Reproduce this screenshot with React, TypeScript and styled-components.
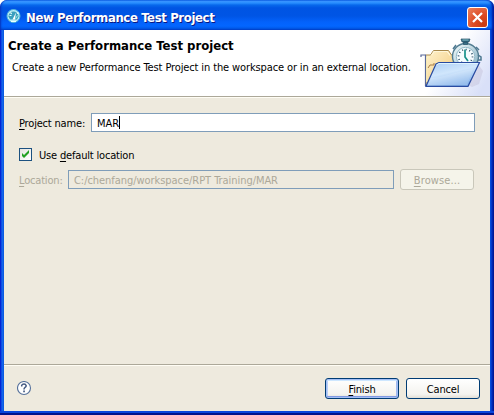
import React from "react";
import styled, { createGlobalStyle } from "styled-components";

const GlobalStyle = createGlobalStyle`
  * { box-sizing: border-box; }
  body { margin: 0; background: #fff; overflow: hidden; }
`;

const Window = styled.div`
  width: 494px;
  height: 415px;
  display: flex;
  flex-direction: column;
  padding: 0 4px 4px;
  border-radius: 7px 7px 0 0;
  background: linear-gradient(to right, #0019cf 0, #0831d9 1px, #166aee 2px, #0855dd 4px, #0855dd 490px, #0441d8 491px, #001ea0 493px, #00138c 494px);
  box-shadow: inset 0 -2px #00138c, inset 0 -4px #0a46dc;
  font-family: "DejaVu Sans Condensed", "DejaVu Sans", sans-serif;
  font-stretch: condensed;
  font-size: 11px;
  color: #000;
  overflow: hidden;
`;

const TitleBar = styled.header`
  flex: none;
  height: 30px;
  margin: 0 -4px;
  padding: 4px 6px 0 6px;
  display: flex;
  align-items: center;
  border-radius: 7px 7px 0 0;
  background: linear-gradient(to bottom, #0058e6 0, #3a93ff 1px, #288eff 3px, #0768ec 5px, #0054e3 8px, #0055e5 16px, #0362fb 22px, #0366ff 26px, #005bec 28px, #0042c8 30px);
  box-shadow: inset 2px 0 2px -1px #0831b8, inset -3px 0 2px -1px #001ea0;
`;

const Label = styled.span<{ $spacing?: number }>`
  white-space: pre;
  padding-top: 2px;
  line-height: 14px;
  letter-spacing: ${(p) => p.$spacing ?? -0.18}px;
  u { text-underline-offset: 2px; text-decoration-thickness: 1px; text-decoration-skip-ink: none; }
`;

const WindowTitle = styled(Label)`
  flex: 1;
  padding-left: 5px;
  color: #fff;
  font: bold 13px/16px "DejaVu Sans Condensed", "DejaVu Sans", sans-serif;
  font-stretch: condensed;
  text-shadow: 1px 1px #0a1883;
`;

const CloseButton = styled.button`
  width: 21px;
  height: 21px;
  padding: 0;
  border: 1px solid #fff;
  border-radius: 3px;
  background: radial-gradient(circle at 85% 90%, #c83a10 0, #de4a24 45%, #e9825f 100%);
  svg { display: block; }
`;

const Client = styled.main`
  flex: 1;
  min-height: 0;
  display: flex;
  flex-direction: column;
  background: #eeeade;
`;

const Banner = styled.section`
  flex: none;
  height: 67px;
  display: flex;
  justify-content: space-between;
  background: #fff;
  border-bottom: 1px solid #aca899;
`;

const BannerText = styled.div`
  flex: 1;
  min-width: 0;
  display: flex;
  flex-direction: column;
  padding: 8px 0 0 4px;
`;

const Heading = styled(Label)`
  padding: 0;
  font-size: 13px;
  font-weight: bold;
  line-height: 16px;
`;

const Description = styled(Label)`
  padding: 7px 0 0 4px;
`;

const BannerArt = styled.svg`
  flex: none;
  display: block;
`;

const Body = styled.section`
  flex: 1;
  border-top: 1px solid #fffdf4;
  padding: 15px 15px 0;
  display: flex;
  flex-direction: column;
`;

const Row = styled.div<{ $height: number; $top?: number }>`
  display: flex;
  align-items: center;
  height: ${(p) => p.$height}px;
  margin-top: ${(p) => p.$top ?? 0}px;
`;

const Caption = styled(Label)<{ $width: number; $muted?: boolean }>`
  width: ${(p) => p.$width}px;
  flex: none;
  color: ${(p) => (p.$muted ? "#aca899" : "#000")};
`;

const Field = styled.div<{ $width: number; $muted?: boolean }>`
  width: ${(p) => p.$width}px;
  height: 19px;
  display: flex;
  align-items: center;
  padding-left: 5px;
  border: 1px solid #7f9db9;
  background: ${(p) => (p.$muted ? "#eeeade" : "#fff")};
  color: ${(p) => (p.$muted ? "#aca899" : "#000")};
`;

const Caret = styled.i`
  width: 1px;
  height: 13px;
  background: #000;
`;

const Checkbox = styled.span`
  width: 13px;
  height: 13px;
  margin-right: 7px;
  border: 1px solid #1c5180;
  background: linear-gradient(135deg, #e4e4df, #fff);
  svg { display: block; }
`;

const Button = styled.button<{ $primary?: boolean; $muted?: boolean }>`
  width: 74px;
  height: 21px;
  padding: 0;
  display: flex;
  align-items: center;
  justify-content: center;
  font: inherit;
  font-stretch: condensed;
  border-radius: 3px;
  border: 1px solid ${(p) => (p.$muted ? "#c9c7ba" : "#003c74")};
  color: ${(p) => (p.$muted ? "#aca899" : "#000")};
  background: ${(p) => (p.$muted ? "#f5f4ea" : "linear-gradient(#fff, #f4f3ef 80%, #e2dfd6)")};
  box-shadow: ${(p) => (p.$primary ? "inset 0 0 0 1px #a4bff5, inset 0 -2px #8099e2, inset 0 2px #cee7ff, inset 2px 0 #b9d0f8, inset -2px 0 #a0b9ed" : "none")};
`;

const Footer = styled.footer`
  flex: none;
  height: 47px;
  display: flex;
  align-items: center;
  gap: 7px;
  padding: 1px 10px 0 13px;
  border-top: 1px solid #aca899;
  box-shadow: inset 0 1px #fffdf4;
`;

const Spacer = styled.span<{ $width?: number }>`
  flex: ${(p) => (p.$width ? `none` : "1")};
  width: ${(p) => (p.$width ? `${p.$width}px` : "auto")};
`;

const AppIcon = () => (
  <svg width="15" height="16" viewBox="0 0 15 16">
    <circle cx="7.5" cy="7" r="6.5" fill="#bcecf4" stroke="#50b8dc" />
    <path d="M2.5 7.5a5 5 0 0 1 10 0l-1.5 3h-7z" fill="#3a9fbe" />
    <path d="M3.5 6.5h2M4.5 3.5l1.2 1.4M11 4.5l1.5-1M5 12.5h5" stroke="#eaffff" strokeWidth="1.2" />
    <path d="M6.5 10.5l3.5-7-1.1 7z" fill="#fff" />
    <path d="M9.5 9.5l2-3" stroke="#9ef0e8" />
  </svg>
);

const FolderArt = () => (
  <BannerArt width="72" height="66" viewBox="0 0 72 66">
    <defs>
      <linearGradient id="haze" x1="0.15" y1="0.2" x2="1" y2="0.7">
        <stop offset="0.35" stopColor="#fff" />
        <stop offset="1" stopColor="#d9e0f8" />
      </linearGradient>
      <linearGradient id="paper" x1="0" y1="0" x2="1" y2="1">
        <stop offset="0" stopColor="#fff3cf" />
        <stop offset="1" stopColor="#f0c470" />
      </linearGradient>
      <linearGradient id="front" x1="0" y1="0" x2="0.5" y2="1">
        <stop offset="0" stopColor="#a8ccf4" />
        <stop offset="0.5" stopColor="#d0e6fc" />
        <stop offset="1" stopColor="#86b3ea" />
      </linearGradient>
      <linearGradient id="watch" x1="0" y1="0" x2="1" y2="1">
        <stop offset="0" stopColor="#f4fbfc" />
        <stop offset="1" stopColor="#83afc2" />
      </linearGradient>
    </defs>
    <path d="M0 0h72v66H0z" fill="url(#haze)" />
    <path d="M50 55l10-21 5 7-4 13-7 3z" fill="#b9b4cd" opacity=".35" />
    <path d="M7.5 26V25h5l3-4.5h15l3 4.5h5v14L8 56V28z" fill="url(#paper)" stroke="#a8894c" />
    <path d="M3 27v-2h5M7.5 25v31" fill="none" stroke="#5a6a9a" strokeWidth="1.2" />
    <path d="M13.5 25l2.7-3.5h13l3 4" fill="none" stroke="#fff7da" strokeWidth="1.2" />
    <path d="M10 38l2-3h4v-2" fill="none" stroke="#a77c48" />
    <path d="M8.7 52V27h3" fill="none" stroke="#fff3bf" />
    <circle cx="47.5" cy="26.5" r="13" fill="url(#watch)" stroke="#527c91" strokeWidth="1.4" />
    <circle cx="47.5" cy="26.5" r="9.2" fill="#f6fcff" stroke="#94bac9" />
    <circle cx="47.5" cy="26.5" r="7" fill="none" stroke="#284c65" strokeWidth="1.7" strokeDasharray="1 2.665" />
    <path d="M47 19.5V27l3 4" fill="none" stroke="#17918b" strokeWidth="1.7" />
    <path d="M43 9h9l-1 3h-7zM45.5 12h4v2.5h-4z" fill="#3a7188" stroke="#224e66" strokeWidth=".7" />
    <path d="M44.5 10h6" stroke="#83bcc5" />
    <path d="M35 19l3-4M58 17l3 3M60 25l3 2v3h-3" fill="none" stroke="#4c7890" strokeWidth="1.5" />
    <path d="M8 56.3L18 34l3-1.5h40.5L50 56.3z" fill="url(#front)" stroke="#294ba1" strokeWidth="1.2" />
    <path d="M18.5 35l2.5-1.5h39" fill="none" stroke="#dff4ff" />
    <path d="M13 48C25 48 35 42 55 39L49 55H10z" fill="#fff" opacity=".15" />
  </BannerArt>
);

const HelpIcon = () => (
  <svg width="15" height="15" viewBox="0 0 15 15">
    <circle cx="7" cy="7" r="6.5" fill="#fff" stroke="#56719b" strokeWidth="1.1" />
    <path d="M4.7 5.5V4.3Q5.3 3 7 3t2.2 1.7q0 1-1.1 1.7T7 8.5" fill="none" stroke="#445a82" strokeWidth="1.5" />
    <path d="M6.2 9.5h1.7v1.7H6.2z" fill="#445a82" />
  </svg>
);

export default function App() {
  return (
    <>
      <GlobalStyle />
      <Window>
        <TitleBar>
          <AppIcon />
          <WindowTitle $spacing={-0.37}>New Performance Test Project</WindowTitle>
          <CloseButton aria-label="Close">
            <svg width="19" height="19" viewBox="0 0 19 19">
              <path d="M5 5l9 9M14 5l-9 9" stroke="#fff" strokeWidth="2.2" />
            </svg>
          </CloseButton>
        </TitleBar>
        <Client>
          <Banner>
            <BannerText>
              <Heading $spacing={0}>Create a Performance Test project</Heading>
              <Description $spacing={-0.122}>Create a new Performance Test Project in the workspace or in an external location.</Description>
            </BannerText>
            <FolderArt />
          </Banner>
          <Body>
            <Row $height={19}>
              <Caption $width={72}><u>P</u>roject name:</Caption>
              <Field $width={384}><Label $spacing={0}>MAR</Label><Caret /></Field>
            </Row>
            <Row $height={13} $top={16}>
              <Checkbox>
                <svg width="11" height="11" viewBox="0 0 11 11">
                  <path d="M2 4v3l2 2 5-5V1L4 6z" fill="#21a121" />
                </svg>
              </Checkbox>
              <Label>Use <u>d</u>efault location</Label>
            </Row>
            <Row $height={21} $top={8}>
              <Caption $width={49} $muted><u>L</u>ocation:</Caption>
              <Field $width={326} $muted><Label $spacing={-0.05}>C:/chenfang/workspace/RPT Training/MAR</Label></Field>
              <Spacer $width={6} />
              <Button $muted disabled><Label $spacing={0.1}><u>B</u>rowse...</Label></Button>
            </Row>
          </Body>
          <Footer>
            <HelpIcon />
            <Spacer />
            <Button $primary><Label><u>F</u>inish</Label></Button>
            <Button><Label>Cancel</Label></Button>
          </Footer>
        </Client>
      </Window>
    </>
  );
}
